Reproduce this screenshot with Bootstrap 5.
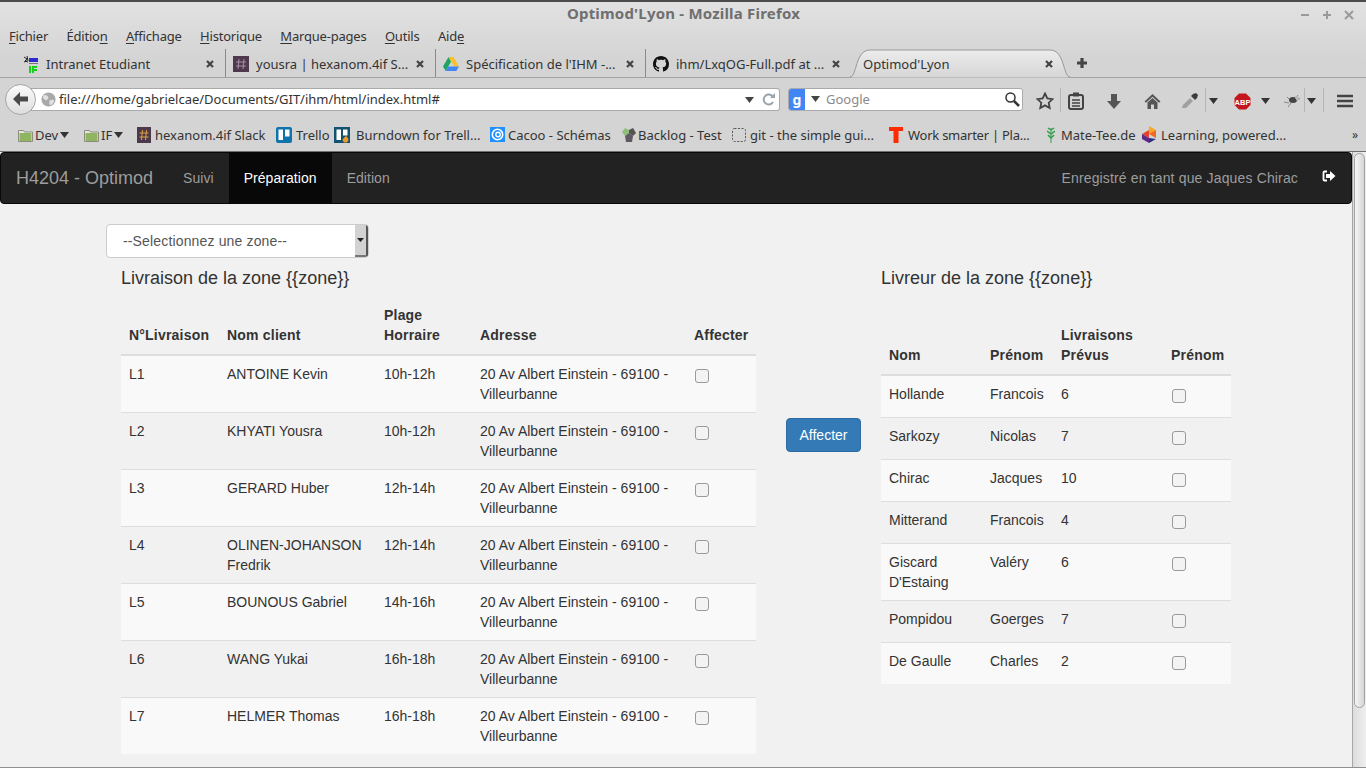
<!DOCTYPE html>
<html lang="fr">
<head>
    <meta charset="UTF-8">
    <meta name="viewport" content="width=device-width, initial-scale=1.0">
    <title>Optimod'Lyon</title>
    <link href="https://cdn.jsdelivr.net/npm/bootstrap@5.3.0/dist/css/bootstrap.min.css" rel="stylesheet">
    <style>
        html, body { height: 768px; overflow: hidden; }
        body { background: #f1f1f1; font-family: "Liberation Sans", Arial, sans-serif; font-size: 14px; line-height: 20px; color: #333; }
        .browser-win { height: 768px; border-bottom: 1px solid #8f8f8f; overflow: hidden; }

        /* firefox chrome */
        .ff-top { font-family: "Noto Sans", sans-serif; font-size: 13px; color: #333; background: linear-gradient(#e2e2e2, #d4d4d4 40%, #d4d4d4); border-bottom: 1px solid #6f6f6f; height: 152px; flex: none; }
        .ff-title { height: 26px; border-top: 2px solid #4c4c4c; font-weight: 700; color: #6f6f6f; line-height: 23px; font-size: 15px; letter-spacing: .2px; }
        .ff-title-text { padding-left: 1px; }
        .ff-winbtns { right: 10px; top: 2px; }
        .ff-menu { height: 23px; padding-left: 9px; gap: 18.4px; line-height: 21px; letter-spacing: -.2px; }
        .ff-menu u { text-underline-offset: 2px; text-decoration-thickness: 1px; }
        .ff-tabs { height: 29px; padding-left: 16px; border-bottom: 1px solid #a3a3a3; }
        .ff-tab { width: 210px; height: 28px; padding: 2px 10px 0 7px; gap: 7px; border-right: 1px solid #8a8a8a; }
        .ff-tab-last { border-right: 0; width: 205px; }
        .ff-tab-active { width: 220px; height: 29px; padding: 1px 16px 0 13px; margin-left: -1px; }
        .ff-tab-shape { left: 0; top: 0; width: 100%; height: 100%; }
        .ff-tab-title { flex: 1 1 auto; white-space: nowrap; overflow: hidden; position: relative; }
        .ff-tab svg { flex: none; position: relative; }
        .ff-plus { margin-left: 6px; }
        .ff-nav { height: 41px; padding: 2px 0 0 5px; }
        .ff-back { width: 31px; height: 31px; margin-top: -1px; border: 1px solid #a5a5a5; border-radius: 50%; background: linear-gradient(#fbfbfb, #dedede); flex: none; z-index: 2; }
        .ff-url { width: 750px; height: 23px; flex: none; margin-left: -6px; background: #fff; border: 1px solid #aaa; border-left: 0; border-radius: 0 3px 3px 0; padding: 0 3px 0 11px; color: #333; line-height: 21px; gap: 3px; }
        .ff-url-text { flex: 1 1 auto; }
        .ff-search { width: 235px; height: 23px; flex: none; margin-left: 8px; background: #fff; border: 1px solid #aaa; border-radius: 3px; color: #8a8a8a; line-height: 21px; padding-right: 1px; }
        .ff-g { width: 16px; height: 21px; background: #4285f4; color: #fff; text-align: center; font-weight: 700; font-size: 14px; border-radius: 2px 0 0 2px; }
        .ff-g-arrow { margin-left: 6px; }
        .ff-search-text { flex: 1 1 auto; padding-left: 6px; }
        .ff-sep { width: 1px; height: 24px; background: #b5b5b5; flex: none; }
        .ff-icons { margin-left: 7px; height: 24px; flex: none; }
        .ff-icons > div { flex: none; }
        .tb-star { width: 30px; }
        .tb-clip { width: 30px; margin-right: 4px; }
        .tb-down, .tb-home { width: 38px; }
        .tb-drop { width: 34px; padding-left: 4px; }
        .tb-arrow { width: 15px; }
        .tb-abp { width: 37px; margin-left: 3px; }
        .tb-arrow-abp { width: 9px; }
        .tb-bug { width: 34px; padding-left: 10px; }
        .tb-arrow-bug { width: 13px; margin-right: 5px; }
        .tb-menu { width: 42px; }
        .ff-bookmarks { height: 31px; padding-left: 18px; white-space: nowrap; }
        .bm-item { gap: 2px; flex: none; }
        .bm-dev { width: 66px; }
        .bm-if { width: 53px; }
        .bm-slack { width: 139px; gap: 4px; }
        .bm-trello { width: 58px; gap: 4px; }
        .bm-burn { width: 156px; gap: 6px; }
        .bm-cacoo { width: 131px; gap: 3px; }
        .bm-backlog { width: 111px; gap: 1px; }
        .bm-git { width: 157px; gap: 4px; }
        .bm-work { width: 158px; gap: 5px; letter-spacing: -.25px; }
        .bm-mate { width: 95px; gap: 6px; }
        .bm-learn { width: 210px; gap: 5px; }
        .bm-more { font-size: 12px; }

        /* page */
        .page-area { height: 615px; overflow: hidden; }
        .page-main { flex: 1 1 auto; min-width: 0; }
        .app-bar.navbar { background: #222; border: 1px solid #080808; border-radius: 4px; height: 52px; padding: 0; align-items: stretch; flex-wrap: nowrap; }
        .app-brand { color: #9d9d9d; font-size: 18px; line-height: 50px; padding: 0 15px; }
        .app-bar.navbar-expand .navbar-nav .nav-link { color: #9d9d9d; padding: 0 15px; line-height: 50px; height: 50px; letter-spacing: .05px; }
        .app-bar.navbar-expand .navbar-nav .nav-link.active { color: #fff; background: #080808; }
        .app-user { color: #9d9d9d; line-height: 50px; letter-spacing: .15px; }
        .app-logout { width: 14px; margin: 0 15px 0 24px; }
        .zone-picker { width: 263px; height: 34px; margin: 20px 0 0 106px; background: #fff; border: 1px solid #ccc; border-radius: 4px; overflow: hidden; }
        .zone-select { flex: 1 1 auto; min-width: 0; border: 0; background: transparent; color: #555; font: 14px "Liberation Sans", Arial, sans-serif; letter-spacing: .15px; padding: 0 0 0 16px; appearance: none; outline: 0; }
        .zone-arrow { width: 13px; background: #d2d2d2; border-right: 2px solid #555; border-bottom: 2px solid #777; }
        .zone-cols { padding-left: 121px; }
        .zone-title { font-size: 18px; line-height: 20px; font-weight: 400; margin: 10px 0; color: #333; }
        .col-livraison { width: 635px; flex: none; }
        .col-action { width: 125px; flex: none; padding: 160px 20px 0 30px; }
        .col-livreur { width: 350px; flex: none; }
        .col-livreur .zone-title { margin-bottom: 30px; }
        .btn-affect.btn { background: #337ab7; border: 1px solid #2e6da4; color: #fff; font-size: 14px; line-height: 20px; padding: 6px 12px; border-radius: 4px; width: 75px; }
        .zone-table.table { table-layout: fixed; margin: 0; --bs-table-bg: transparent; --bs-table-color: #333; color: #333; border-color: #ddd; }
        .zone-table th, .zone-table td { padding: 8px; line-height: 20px; vertical-align: top; border-top: 1px solid #ddd; border-bottom: 0; background: transparent; box-shadow: none; }
        .zone-table thead th { vertical-align: bottom; border-top: 0; border-bottom: 2px solid #ddd; padding: 7px 8px 9px; letter-spacing: .2px; }
        .zone-table tbody tr:first-child td { border-top: 0; }
        .zone-table tbody tr:nth-child(odd) td { background: #f9f9f9; }
        .zone-check.form-check-input { display: block; width: 14px; height: 14px; margin: 5px 0 6px 1px; border: 1px solid #9a9a9a; border-radius: 3px; background-color: #f3f3f3; float: none; }
        .w-lv1 { width: 98px; } .w-lv2 { width: 157px; } .w-lv3 { width: 96px; } .w-lv4 { width: 214px; } .w-lv5 { width: 70px; }
        .w-lr1 { width: 101px; } .w-lr2 { width: 71px; } .w-lr3 { width: 110px; } .w-lr4 { width: 68px; }
        .page-scroll { width: 14px; flex: none; border-left: 1px solid #a6a6a6; background: linear-gradient(90deg, #dcdcdc, #efefef); padding: 1px 1px 0 1px; }
        .page-thumb { height: 555px; border: 1px solid #a2a2a2; border-radius: 6px; background: linear-gradient(90deg, #f5f5f5, #d6d6d6); }
    </style>
</head>
<body>
<div class="browser-win d-flex flex-column">
    <div class="ff-top">
        <div class="ff-title position-relative text-center">
            <span class="ff-title-text">Optimod'Lyon - Mozilla Firefox</span>
            <div class="ff-winbtns position-absolute d-flex gap-2">
                <svg width="14" height="20" viewBox="0 0 14 20"><path d="M3 11h8" stroke="#9a9a9a" stroke-width="2"/></svg>
                <svg width="14" height="20" viewBox="0 0 14 20"><path d="M3 11h8M7 7v8" stroke="#9a9a9a" stroke-width="2"/></svg>
                <svg width="14" height="20" viewBox="0 0 14 20"><path d="M3 7l8 8M11 7l-8 8" stroke="#9a9a9a" stroke-width="2"/></svg>
            </div>
        </div>
        <div class="ff-menu d-flex">
            <span><u>F</u>ichier</span><span>Éditio<u>n</u></span><span><u>A</u>ffichage</span><span><u>H</u>istorique</span><span><u>M</u>arque-pages</span><span><u>O</u>utils</span><span>Aid<u>e</u></span>
        </div>
        <div class="ff-tabs d-flex align-items-start">
            <div class="ff-tab d-flex align-items-center">
                <svg width="16" height="18" viewBox="0 0 16 18"><path d="M1 2l3 2-2 2 3 1M4 1l1 5M1 7l3-1" stroke="#222" fill="none"/><rect x="6" y="3" width="9" height="4" fill="#2a2ad0"/><rect x="6" y="8" width="9" height="1" fill="#777"/><path d="M6 11h2v7H6zM9 11h5v2h-3v1h3v2h-3v2H9z" fill="#18d018"/></svg>
                <span class="ff-tab-title">Intranet Etudiant</span>
                <svg width="10" height="10" viewBox="0 0 10 10"><path d="M2 2l6 6M8 2l-6 6" stroke="#444" stroke-width="2.2"/></svg>
            </div>
            <div class="ff-tab d-flex align-items-center">
                <svg width="16" height="16" viewBox="0 0 16 16"><rect width="16" height="16" fill="#4d394b"/><path d="M6 3L5 13M11 3l-1 10M3 6h10M3 10h10" stroke="#a98fa6" stroke-width="1"/></svg>
                <span class="ff-tab-title">yousra | hexanom.4if S...</span>
                <svg width="10" height="10" viewBox="0 0 10 10"><path d="M2 2l6 6M8 2l-6 6" stroke="#444" stroke-width="2.2"/></svg>
            </div>
            <div class="ff-tab d-flex align-items-center">
                <svg width="16" height="16" viewBox="0 0 16 16"><path d="M5.5 1h5L16 10.500h-5z" fill="#fbc02d"/><path d="M5.500 1L0 10.500 2.700 15l5.300-9.200z" fill="#1fa463"/><path d="M2.700 15h10.600L16 10.500H5.300z" fill="#4285f4"/></svg>
                <span class="ff-tab-title">Spécification de l'IHM -...</span>
                <svg width="10" height="10" viewBox="0 0 10 10"><path d="M2 2l6 6M8 2l-6 6" stroke="#444" stroke-width="2.2"/></svg>
            </div>
            <div class="ff-tab ff-tab-last d-flex align-items-center">
                <svg width="16" height="16" viewBox="0 0 16 16"><path fill="#111" d="M8 0C3.58 0 0 3.58 0 8c0 3.54 2.29 6.53 5.47 7.59.4.07.55-.17.55-.38 0-.19-.01-.82-.01-1.49-2.01.37-2.53-.49-2.69-.94-.09-.23-.48-.94-.82-1.13-.28-.15-.68-.52-.01-.53.63-.01 1.08.58 1.23.82.72 1.21 1.87.87 2.33.66.07-.52.28-.87.51-1.07-1.78-.2-3.64-.89-3.64-3.95 0-.87.31-1.59.82-2.15-.08-.2-.36-1.02.08-2.12 0 0 .67-.21 2.2.82.64-.18 1.32-.27 2-.27.68 0 1.36.09 2 .27 1.53-1.04 2.2-.82 2.2-.82.44 1.1.16 1.92.08 2.12.51.56.82 1.27.82 2.15 0 3.07-1.87 3.75-3.65 3.95.29.25.54.73.54 1.48 0 1.07-.01 1.93-.01 2.2 0 .21.15.46.55.38A8.013 8.013 0 0016 8c0-4.42-3.58-8-8-8z"/></svg>
                <span class="ff-tab-title">ihm/LxqOG-Full.pdf at ...</span>
                <svg width="10" height="10" viewBox="0 0 10 10"><path d="M2 2l6 6M8 2l-6 6" stroke="#444" stroke-width="2.2"/></svg>
            </div>
            <div class="ff-tab ff-tab-last ff-tab-active position-relative d-flex align-items-center">
                <svg class="ff-tab-shape position-absolute" viewBox="0 0 220 29" preserveAspectRatio="none"><defs><linearGradient id="tabfill" x1="0" y1="0" x2="0" y2="1"><stop offset="0" stop-color="#ececec"/><stop offset="1" stop-color="#d6d6d6"/></linearGradient></defs><path d="M0 28.500C7 28.500 5 1 20 1H200C215 1 213 28.500 220 28.500Z" fill="url(#tabfill)"/><path d="M0 28C7 28 5 1 20 1H200C215 1 213 28 220 28" fill="none" stroke="#989898"/></svg>
                <span class="ff-tab-title">Optimod'Lyon</span>
                <svg width="10" height="10" viewBox="0 0 10 10"><path d="M2 2l6 6M8 2l-6 6" stroke="#444" stroke-width="2.2"/></svg>
            </div>
            <svg class="ff-plus align-self-center" width="12" height="12" viewBox="0 0 12 12"><path d="M6 1v10M1 6h10" stroke="#444" stroke-width="3.200"/></svg>
        </div>
        <div class="ff-nav d-flex align-items-center">
            <div class="ff-back d-flex align-items-center justify-content-center">
                <svg width="18" height="16" viewBox="0 0 18 16"><path d="M8 1L1 8l7 7V10.500h8v-5H8z" fill="#4a4a4a"/></svg>
            </div>
            <div class="ff-url d-flex align-items-center">
                <svg width="15" height="15" viewBox="0 0 16 16"><circle cx="8" cy="8" r="7.500" fill="#a8a8a8"/><path d="M3 3l4 1 1 3-3 2-3-3zM9 9l4-1 1 2-3 4-2-1z" fill="#e2e2e2"/></svg>
                <span class="ff-url-text">file:///home/gabrielcae/Documents/GIT/ihm/html/index.html#</span>
                <svg width="10" height="8" viewBox="0 0 10 8"><path d="M0 1h9L4.500 7z" fill="#444"/></svg>
                <svg class="ms-1" width="14" height="14" viewBox="0 0 14 14"><path d="M11 9A5 5 0 1 1 11 4" fill="none" stroke="#9aa4ad" stroke-width="2"/><path d="M8 5h5V0z" fill="#9aa4ad"/></svg>
            </div>
            <div class="ff-search d-flex align-items-center">
                <span class="ff-g">g</span>
                <svg class="ff-g-arrow" width="9" height="7" viewBox="0 0 9 7"><path d="M0 0h9L4.500 6z" fill="#444"/></svg>
                <span class="ff-search-text">Google</span>
                <svg width="17" height="17" viewBox="0 0 17 17"><circle cx="6.500" cy="6.500" r="4.500" fill="none" stroke="#333" stroke-width="1.500"/><path d="M10 10l5 5" stroke="#333" stroke-width="2.500"/></svg>
            </div>
            <div class="ff-icons d-flex align-items-center">
                <div class="tb-star text-center"><svg width="18" height="18" viewBox="0 0 18 18"><path d="M9 1.500l2.300 4.900 5.300.7-3.900 3.600 1 5.300L9 13.400 4.300 16l1-5.300L1.400 7.100l5.300-.7z" fill="none" stroke="#444" stroke-width="1.800"/></svg></div>
                <div class="ff-sep"></div>
                <div class="tb-clip text-center"><svg width="16" height="18" viewBox="0 0 16 18"><rect x="1" y="3" width="14" height="14" rx="2" fill="none" stroke="#444" stroke-width="2"/><rect x="5" y="0.500" width="6" height="4" fill="#444"/><path d="M4 8h8M4 11h8M4 14h8" stroke="#444" stroke-width="1.600"/></svg></div>
                <div class="tb-down text-center"><svg width="16" height="17" viewBox="0 0 16 17"><path d="M5 1h6v7h4l-7 8-7-8h4z" fill="#555"/></svg></div>
                <div class="tb-home text-center"><svg width="17" height="16" viewBox="0 0 17 16"><path d="M8.500 1L0.500 8.500 2 9.700l6.500-6 6.500 6 1.500-1.200z" fill="#555"/><path d="M3.500 9.500l5-4.500 5 4.500V16H10v-4.500H7V16H3.500z" fill="#555"/></svg></div>
                <div class="tb-drop text-center"><svg width="18" height="16" viewBox="0 0 18 16"><path d="M1 15l1-3 7-7 3 3-7 7z" fill="#a0a0a0"/><path d="M10 3l2-2 3-1 2 2-1 3-2 2z" fill="#3c3c3c"/></svg></div>
                <div class="ff-sep"></div>
                <div class="tb-arrow text-center"><svg width="9" height="6" viewBox="0 0 9 6"><path d="M0 0h9L4.500 6z" fill="#333"/></svg></div>
                <div class="tb-abp text-center"><svg width="17" height="17" viewBox="0 0 17 17"><path d="M5 0.500h7l4.500 4.500v7L12 16.500H5L0.500 12V5z" fill="#c4161c"/><text x="8.500" y="11.500" text-anchor="middle" font-family="Liberation Sans" font-weight="700" font-size="7.500" fill="#fff">ABP</text></svg></div>
                <div class="tb-arrow-abp text-center"><svg width="9" height="6" viewBox="0 0 9 6"><path d="M0 0h9L4.500 6z" fill="#333"/></svg></div>
                <div class="tb-bug text-center"><svg width="17" height="14" viewBox="0 0 17 14"><path d="M0 8l5 1M3 3l4 4M14 1l-3 4M16 4l-4 3M4 13l3-4" stroke="#888" fill="none"/><ellipse cx="9" cy="6" rx="4" ry="3" fill="#444"/><path d="M10 2l5 1-2 4z" fill="#bbb"/></svg></div>
                <div class="ff-sep"></div>
                <div class="tb-arrow-bug text-center"><svg width="9" height="6" viewBox="0 0 9 6"><path d="M0 0h9L4.500 6z" fill="#333"/></svg></div>
                <div class="ff-sep"></div>
                <div class="tb-menu text-center"><svg width="16" height="14" viewBox="0 0 16 14"><path d="M0 2h16M0 7h16M0 12h16" stroke="#444" stroke-width="2.500"/></svg></div>
            </div>
        </div>
        <div class="ff-bookmarks d-flex align-items-center">
            <div class="bm-item bm-dev d-flex align-items-center">
                <svg width="15" height="14" viewBox="0 0 15 14"><path d="M0.500 2.500h5l1 1.500h8v9.500H0.500z" fill="#e6e6e0" stroke="#8c8c80"/><rect x="1.500" y="5" width="12" height="8" fill="#8fb560"/></svg>
                <span>Dev</span>
                <svg width="9" height="6" viewBox="0 0 9 6"><path d="M0 0h9L4.500 6z" fill="#333"/></svg>
            </div>
            <div class="bm-item bm-if d-flex align-items-center">
                <svg width="15" height="14" viewBox="0 0 15 14"><path d="M0.500 2.500h5l1 1.500h8v9.500H0.500z" fill="#e6e6e0" stroke="#8c8c80"/><rect x="1.500" y="5" width="12" height="8" fill="#8fb560"/></svg>
                <span>IF</span>
                <svg width="9" height="6" viewBox="0 0 9 6"><path d="M0 0h9L4.500 6z" fill="#333"/></svg>
            </div>
            <div class="bm-item bm-slack d-flex align-items-center">
                <svg width="14" height="16" viewBox="0 0 14 16"><rect width="14" height="16" fill="#4d394b"/><path d="M5.500 3l-1 10M9.500 3l-1 10M2.500 6h9M2.500 10h9" stroke="#d9a441"/></svg>
                <span>hexanom.4if Slack</span>
            </div>
            <div class="bm-item bm-trello d-flex align-items-center">
                <svg width="16" height="16" viewBox="0 0 16 16"><rect width="16" height="16" rx="2" fill="#0e74ac"/><rect x="2.500" y="2.500" width="4.500" height="10.500" fill="#fff"/><rect x="9" y="2.500" width="4.500" height="7" fill="#fff"/></svg>
                <span>Trello</span>
            </div>
            <div class="bm-item bm-burn d-flex align-items-center">
                <svg width="16" height="16" viewBox="0 0 16 16"><rect width="16" height="16" fill="#14536f"/><rect x="2.500" y="2.500" width="4.500" height="10.500" fill="#fff"/><rect x="9" y="2.500" width="4.500" height="6" fill="#fff"/><path d="M12 9c2 2 3 3 2 5-1 2-4 2-5 0s1-3 3-5z" fill="#f59b23"/></svg>
                <span>Burndown for Trell...</span>
            </div>
            <div class="bm-item bm-cacoo d-flex align-items-center">
                <svg width="15" height="15" viewBox="0 0 15 15"><rect width="15" height="15" fill="#1e90ff"/><circle cx="7.500" cy="7.500" r="5.200" fill="none" stroke="#fff" stroke-width="1.600"/><circle cx="8" cy="7.500" r="2.200" fill="none" stroke="#fff" stroke-width="1.400"/></svg>
                <span>Cacoo - Schémas</span>
            </div>
            <div class="bm-item bm-backlog d-flex align-items-center">
                <svg width="16" height="16" viewBox="0 0 16 16"><path d="M8 3l4-2 3 5-3 3-4-3z" fill="#56524f"/><path d="M4 1l4 2 0 3-4 3-3-4z" fill="#8fbf7a"/><path d="M4 9l4-3 4 3-1 6H5z" fill="#625a63"/></svg>
                <span>Backlog - Test</span>
            </div>
            <div class="bm-item bm-git d-flex align-items-center">
                <svg width="14" height="14" viewBox="0 0 14 14"><rect x="0.500" y="0.500" width="13" height="13" rx="2" fill="none" stroke="#555" stroke-dasharray="2 1.500"/></svg>
                <span>git - the simple gui...</span>
            </div>
            <div class="bm-item bm-work d-flex align-items-center">
                <svg width="14" height="16" viewBox="0 0 14 16"><path d="M0 0h14v4H9.500v12h-5V4H0z" fill="#ff2a00"/></svg>
                <span>Work smarter | Pla...</span>
            </div>
            <div class="bm-item bm-mate d-flex align-items-center">
                <svg width="8" height="16" viewBox="0 0 8 16"><path d="M4 1v15" stroke="#2f9e44"/><path d="M4 3L1 1M4 3l3-2M4 7L0 4M4 7l4-3M4 11L1 8M4 11l3-3" stroke="#2f9e44" stroke-width="1.500" fill="none"/></svg>
                <span>Mate-Tee.de</span>
            </div>
            <div class="bm-item bm-learn d-flex align-items-center">
                <svg width="14" height="17" viewBox="0 0 14 17"><path d="M7 0l7 4-7 4z" fill="#f7a823"/><path d="M0 8l7-4v8z" fill="#e8412a"/><path d="M7 8l7-4v8z" fill="#f26722"/><path d="M0 8l7 4v5l-7-4z" fill="#5b2a86"/><path d="M7 12l7 1-7 4z" fill="#2b2f7f"/></svg>
                <span>Learning, powered...</span>
            </div>
            <span class="bm-more">»</span>
        </div>
    </div>

    <div class="page-area d-flex">
        <div class="page-main">
            <nav class="app-bar navbar navbar-expand">
                <a class="app-brand text-decoration-none" href="#">H4204 - Optimod</a>
                <ul class="navbar-nav">
                    <li class="nav-item"><a class="nav-link" href="#">Suivi</a></li>
                    <li class="nav-item"><a class="nav-link active" href="#">Préparation</a></li>
                    <li class="nav-item"><a class="nav-link" href="#">Edition</a></li>
                </ul>
                <div class="ms-auto d-flex align-items-center">
                    <span class="app-user">Enregistré en tant que Jaques Chirac</span>
                    <svg class="app-logout mb-1" width="14" height="12" viewBox="0 0 14 12"><path d="M5 1.500H2.500a1 1 0 0 0-1 1v7a1 1 0 0 0 1 1H5" fill="none" stroke="#fff" stroke-width="1.800"/><path d="M8 1l5.500 5L8 11V8H4V4h4z" fill="#fff"/></svg>
                </div>
            </nav>

            <div class="zone-picker d-flex">
                <select class="zone-select"><option>--Selectionnez une zone--</option></select>
                <span class="zone-arrow d-flex align-items-center justify-content-center">
                    <svg width="7" height="4" viewBox="0 0 7 4"><path d="M0 0h7L3.500 4z" fill="#222"/></svg>
                </span>
            </div>

            <div class="zone-cols d-flex">
                <div class="col-livraison">
                    <h4 class="zone-title">Livraison de la zone {{zone}}</h4>
                    <table class="table zone-table">
                        <thead>
                            <tr>
                                <th class="w-lv1">N°Livraison</th>
                                <th class="w-lv2">Nom client</th>
                                <th class="w-lv3">Plage Horraire</th>
                                <th class="w-lv4">Adresse</th>
                                <th class="w-lv5">Affecter</th>
                            </tr>
                        </thead>
                        <tbody>
                            <tr><td>L1</td><td>ANTOINE Kevin</td><td>10h-12h</td><td>20 Av Albert Einstein - 69100 - Villeurbanne</td><td><input type="checkbox" class="form-check-input zone-check"></td></tr>
                            <tr><td>L2</td><td>KHYATI Yousra</td><td>10h-12h</td><td>20 Av Albert Einstein - 69100 - Villeurbanne</td><td><input type="checkbox" class="form-check-input zone-check"></td></tr>
                            <tr><td>L3</td><td>GERARD Huber</td><td>12h-14h</td><td>20 Av Albert Einstein - 69100 - Villeurbanne</td><td><input type="checkbox" class="form-check-input zone-check"></td></tr>
                            <tr><td>L4</td><td>OLINEN-JOHANSON Fredrik</td><td>12h-14h</td><td>20 Av Albert Einstein - 69100 - Villeurbanne</td><td><input type="checkbox" class="form-check-input zone-check"></td></tr>
                            <tr><td>L5</td><td>BOUNOUS Gabriel</td><td>14h-16h</td><td>20 Av Albert Einstein - 69100 - Villeurbanne</td><td><input type="checkbox" class="form-check-input zone-check"></td></tr>
                            <tr><td>L6</td><td>WANG Yukai</td><td>16h-18h</td><td>20 Av Albert Einstein - 69100 - Villeurbanne</td><td><input type="checkbox" class="form-check-input zone-check"></td></tr>
                            <tr><td>L7</td><td>HELMER Thomas</td><td>16h-18h</td><td>20 Av Albert Einstein - 69100 - Villeurbanne</td><td><input type="checkbox" class="form-check-input zone-check"></td></tr>
                        </tbody>
                    </table>
                </div>
                <div class="col-action">
                    <button type="button" class="btn btn-affect">Affecter</button>
                </div>
                <div class="col-livreur">
                    <h4 class="zone-title">Livreur de la zone {{zone}}</h4>
                    <table class="table zone-table">
                        <thead>
                            <tr>
                                <th class="w-lr1">Nom</th>
                                <th class="w-lr2">Prénom</th>
                                <th class="w-lr3">Livraisons Prévus</th>
                                <th class="w-lr4">Prénom</th>
                            </tr>
                        </thead>
                        <tbody>
                            <tr><td>Hollande</td><td>Francois</td><td>6</td><td><input type="checkbox" class="form-check-input zone-check"></td></tr>
                            <tr><td>Sarkozy</td><td>Nicolas</td><td>7</td><td><input type="checkbox" class="form-check-input zone-check"></td></tr>
                            <tr><td>Chirac</td><td>Jacques</td><td>10</td><td><input type="checkbox" class="form-check-input zone-check"></td></tr>
                            <tr><td>Mitterand</td><td>Francois</td><td>4</td><td><input type="checkbox" class="form-check-input zone-check"></td></tr>
                            <tr><td>Giscard D'Estaing</td><td>Valéry</td><td>6</td><td><input type="checkbox" class="form-check-input zone-check"></td></tr>
                            <tr><td>Pompidou</td><td>Goerges</td><td>7</td><td><input type="checkbox" class="form-check-input zone-check"></td></tr>
                            <tr><td>De Gaulle</td><td>Charles</td><td>2</td><td><input type="checkbox" class="form-check-input zone-check"></td></tr>
                        </tbody>
                    </table>
                </div>
            </div>
        </div>
        <div class="page-scroll">
            <div class="page-thumb"></div>
        </div>
    </div>
</div>
<script src="https://cdn.jsdelivr.net/npm/bootstrap@5.3.0/dist/js/bootstrap.bundle.min.js"></script>
</body>
</html>
